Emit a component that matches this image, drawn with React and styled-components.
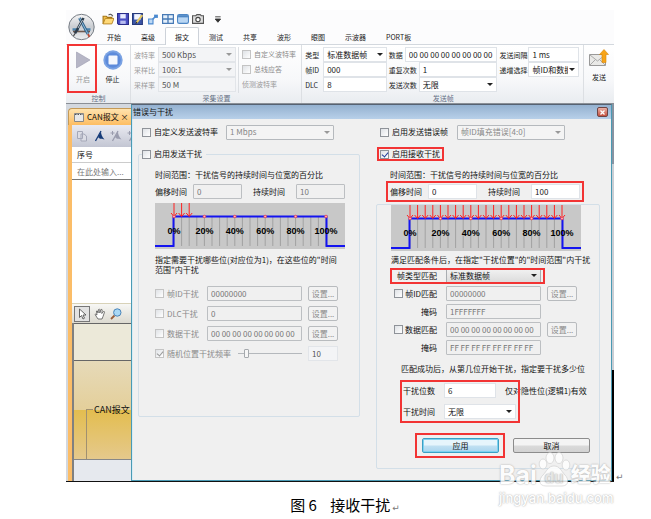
import React, { useId } from "react";
import styled, { createGlobalStyle, css } from "styled-components";

const GlobalStyle = createGlobalStyle`
  * {
    box-sizing: border-box;
  }
  body {
    margin: 0;
    background: #fff;
    color: #111;
    font-family: "Noto Sans CJK SC", sans-serif;
    font-size: 8px;
    line-height: 10px;
  }
  button, input, select {
    margin: 0;
    font: inherit;
    color: inherit;
  }
`;

const Page = styled.main`
  padding: 10px 27px 0 66px;
`;
const Figure = styled.figure`
  margin: 0;
  position: relative;
`;
const ShotRow = styled.div`
  display: flex;
  align-items: flex-end;
`;
const Shot = styled.div`
  flex: 1;
  min-width: 0;
`;
const ReturnMark = styled.span`
  width: 10px;
  padding-left: 2px;
  color: #777;
  font-family: "DejaVu Sans", sans-serif;
  font-size: 9px;
`;
const Caption = styled.figcaption`
  padding: 12px 0 0;
  text-align: center;
  white-space: pre;
  font-size: 15px;
  line-height: 22px;
  color: #000;
`;

// red annotation frame drawn over whatever it wraps
const Marked = styled.div`
  position: relative;
  &::after {
    content: "";
    position: absolute;
    inset: ${p => p.$inset || "-2px"};
    border: 2px solid #f23434;
    pointer-events: none;
  }
`;

/* ---------- ribbon ---------- */

const Ribbon = styled.header`
  background: #fcfcfd;
  font-size: 7px;
  border-bottom: 1px solid #8a8f96;
`;
const RibbonTop = styled.div`
  display: grid;
  grid-template-columns: 31px 1fr;
  align-items: center;
  border-bottom: 1px solid #d3d8de;
`;
const QuickBar = styled.div`
  display: flex;
  align-items: center;
  gap: 4px;
  height: 17px;
  padding-left: 5px;
  svg {
    width: 12px;
    height: 12px;
    margin-right: -1px;
  }
`;
const TabList = styled.nav`
  display: flex;
  height: 17px;
`;
const Tab = styled.button`
  padding: 0 9px;
  border: 1px solid ${p => (p.$active ? "#cdd2d9" : "transparent")};
  border-bottom: 0;
  border-radius: 2px 2px 0 0;
  background: ${p => (p.$active ? "#fff" : "transparent")};
  margin-bottom: -1px;
  color: #222;
  white-space: nowrap;
`;
const Groups = styled.div`
  display: flex;
  background: linear-gradient(#fff, #f7f8fa 60%, #e9ecf0);
`;
const Group = styled.section`
  display: flex;
  flex-direction: column;
  width: ${p => p.$width};
  padding: 2px 2px 0 3px;
  border-right: 1px solid #dcdfe3;
`;
const GroupBody = styled.div`
  display: flex;
  height: 46px;
`;
const GroupName = styled.div`
  text-align: center;
  color: #667085;
`;
const BigButton = styled.button`
  display: flex;
  flex-direction: column;
  align-items: center;
  gap: 4px;
  width: ${p => p.$width || "28px"};
  height: 44px;
  padding: 3px 0 0;
  border: 0;
  background: transparent;
  color: ${p => (p.$dim ? "#999" : "#222")};
  svg {
    width: 20px;
    height: 20px;
  }
`;
const RibbonFields = styled.div`
  width: ${p => p.$width};
  margin-right: 2px;
`;
const RibbonLine = styled.div`
  display: flex;
  align-items: center;
  height: 15px;
  color: ${p => (p.$dim ? "#999" : "#222")};
  label {
    flex: none;
    width: ${p => p.$label};
    white-space: nowrap;
  }
`;
const RibbonOptions = styled.div`
  display: flex;
  flex-direction: column;
  padding-left: 3px;
  border-left: 1px solid #dcdfe3;
  color: #999;
  > * {
    height: 15px;
    line-height: 15px;
  }
`;

/* ---------- form parts ---------- */

const Box = styled.input`
  flex: 1;
  min-width: 0;
  width: 100%;
  height: 15px;
  padding: 0 3px;
  border: 1px solid #dfe3e8;
  background: #fff;
  color: #222;
  font-size: 8px;
  outline: 0;
  ${p => p.$flat && css`
    border-color: #e2e5e9;
    background: #f3f4f6;
    color: #555;
  `}
  ${p => p.$off && css`
    border-color: #bcbfc2;
    border-radius: 1px;
    background: #f0f0f0;
    color: #777;
  `}
`;
const selectLooks = {
  plain: css`
    border-color: #dfe3e8;
    background: #fff;
    color: #111;
  `,
  flat: css`
    border-color: #e2e5e9;
    background: #f3f4f6;
    color: #555;
  `,
  off: css`
    border-color: #b5b9bd;
    border-radius: 1px;
    background: #f4f4f4;
    color: #888;
  `,
  button: css`
    border-color: #a9adb1;
    border-radius: 1px;
    background: linear-gradient(#f2f2f2, #dcdcdc);
    color: #111;
  `
};
const SelectWrap = styled.span`
  position: relative;
  display: flex;
  flex: 1;
  min-width: 0;
  width: ${p => p.$width || "100%"};
  &::after {
    content: "";
    position: absolute;
    right: 4px;
    top: 6px;
    border: 3px solid transparent;
    border-top-color: ${p => (p.$look === "off" || p.$look === "flat" ? "#999" : "#222")};
    border-bottom: 0;
    pointer-events: none;
  }
  select {
    appearance: none;
    width: 100%;
    height: 15px;
    padding: 0 10px 0 3px;
    border: 1px solid;
    opacity: 1;
    outline: 0;
    font-size: 8px;
    ${p => selectLooks[p.$look || "plain"]}
  }
`;
const Tick = styled.label`
  display: inline-flex;
  align-items: center;
  gap: 3px;
  white-space: nowrap;
  color: ${p => (p.$dim ? "#8a8a8a" : "inherit")};
  input {
    appearance: none;
    position: relative;
    flex: none;
    width: 9px;
    height: 9px;
    border: 1px solid ${p => (p.$dim ? "#c4c4c4" : "#8f9399")};
    background: linear-gradient(135deg, #dfe2e6, #fff);
  }
  input:checked::after {
    content: "";
    position: absolute;
    left: 2px;
    top: 0;
    width: 3px;
    height: 5px;
    border: solid ${p => (p.$dim ? "#999" : "#243f9c")};
    border-width: 0 1px 1px 0;
    transform: rotate(40deg);
  }
`;
const PushButton = styled.button`
  height: 15px;
  padding: 0;
  border: 1px solid #8c8c8c;
  border-radius: 2px;
  background: linear-gradient(#f4f4f4 45%, #dadada 55%, #d2d2d2);
  ${p => p.$wide && css`
    width: 77px;
  `}
  ${p => p.$primary && css`
    border-color: #3c9fc4;
    background: linear-gradient(#e6f5fc 45%, #c0e0f2 55%, #a9d5ee);
    box-shadow: inset 0 0 0 1px #7fd2ef;
  `}
  ${p => p.$off && css`
    border-color: #b8bbbe;
    background: #f2f2f2;
    color: #8a8a8a;
  `}
`;

function Select({ label, value, look, width }) {
  return (
    <SelectWrap $look={look} $width={width}>
      <select aria-label={label} disabled={look === "off"} defaultValue={value}>
        <option>{value}</option>
      </select>
    </SelectWrap>
  );
}

function Check({ children, checked, dim }) {
  return (
    <Tick $dim={dim}>
      <input type="checkbox" defaultChecked={checked} disabled={dim} />
      {children}
    </Tick>
  );
}

function RibbonField({ label, width, value, dim, select }) {
  const id = useId();
  return (
    <RibbonLine $label={width} $dim={dim}>
      <label htmlFor={id}>{label}</label>
      {select ? (
        <SelectWrap $look={dim ? "flat" : "plain"}>
          <select id={id} defaultValue={value}>
            <option>{value}</option>
          </select>
        </SelectWrap>
      ) : (
        <Box id={id} defaultValue={value} $flat={dim} />
      )}
    </RibbonLine>
  );
}

/* ---------- left workspace ---------- */

const Workspace = styled.div`
  display: grid;
  grid-template-columns: 65px 1fr 2px;
  border-bottom: 1px solid #111;
`;
const Side = styled.aside`
  display: flex;
  flex-direction: column;
  padding: 4px 0 0 2px;
  background: #d3d8df;
  overflow: hidden;
`;
const DocTab = styled.div`
  display: flex;
  align-items: center;
  gap: 3px;
  height: 17px;
  padding-left: 5px;
  border: 1px solid #c49a58;
  border-width: 1px 0 0 1px;
  border-radius: 4px 0 0 0;
  background: linear-gradient(#ffe3ae, #fdbd62);
  white-space: nowrap;
  svg {
    flex: none;
  }
`;
const DocBody = styled.div`
  display: flex;
  flex: 1;
  flex-direction: column;
  border-left: 4px solid #fbbd68;
  background: #fff;
`;
const ToolStrip = styled.div`
  display: flex;
  align-items: center;
  gap: ${p => (p.$light ? "4px" : "5px")};
  height: ${p => (p.$light ? "19px" : "22px")};
  padding-left: ${p => (p.$light ? "2px" : "4px")};
  background: ${p => (p.$light ? "linear-gradient(#f7f7f5, #dcdad0)" : "linear-gradient(#e9eaf1, #c3c6d3)")};
  svg {
    flex: none;
    width: 12px;
    height: 12px;
  }
`;
const ToolPick = styled.span`
  display: flex;
  padding: 1px;
  border: 1px solid #777;
  background: #e2e2e2;
`;
const ListHead = styled.div`
  height: 16px;
  padding: 3px 5px;
  border-bottom: 1px solid #ccc;
`;
const ListHint = styled.div`
  height: 17px;
  padding: 4px 5px;
  border-bottom: 1px solid #777;
  color: #777;
  white-space: nowrap;
`;
const ListSpace = styled.div`
  height: 124px;
  border-bottom: 1px solid #d8d2b8;
`;
const Canvas = styled.div`
  display: flex;
  flex: 1;
  flex-direction: column;
  border-left: 2px solid #808080;
  background: #e6e9ee;
`;
const Ruler = styled.div`
  height: 38px;
  border: 1px solid #666;
  border-width: 1px 0;
  background: #ece9d9;
`;
const Lane = styled.div`
  display: flex;
  align-items: center;
  height: 99px;
  padding-left: 12px;
  border-bottom: 1px solid #888;
  background: linear-gradient(#e6dab9, #e4cf9a 50%, #e3bd4f 50%, #e5c98c);
  font-size: 9px;
  white-space: nowrap;
  &::before {
    content: "";
    flex: none;
    align-self: flex-end;
    width: 6px;
    height: 49px;
    margin-right: 1px;
    border: 1px solid #a09070;
    border-width: 1px 0 0 1px;
  }
`;
const Edge = styled.div`
  background: linear-gradient(#8894a2 0 60px, #c9ced4 60px 266px, #000 266px);
`;

/* ---------- dialog ---------- */

const Dialog = styled.section`
  border: 1px solid #4a9ab4;
  border-top-color: #566272;
  background: #f0f0f0;
  box-shadow: inset 1px 0 0 #d7ecf5;
`;
const TitleBar = styled.div`
  display: flex;
  align-items: center;
  justify-content: space-between;
  height: 14px;
  padding: 0 3px 0 1px;
  background: linear-gradient(#94b1d0, #b8d0e9);
`;
const CloseButton = styled.button`
  display: flex;
  align-items: center;
  justify-content: center;
  width: 11px;
  height: 10px;
  padding: 0;
  border: 1px solid #6e4444;
  border-radius: 2px;
  background: linear-gradient(#e9b0a6, #c5503f);
`;
const DialogBody = styled.div`
  display: grid;
  grid-template-columns: 222fr 224fr;
  gap: 16px;
  align-items: start;
  padding: 6px 11px 11px 6px;
`;
const TopLine = styled.div`
  display: flex;
  align-items: center;
  height: 14px;
  margin-bottom: 8px;
  padding-left: 4px;
  > label {
    width: ${p => p.$label};
  }
`;
const Fieldset = styled.fieldset`
  min-width: 0;
  margin: 0;
  padding: 0 3px;
  border: 1px solid #d3dfe8;
  border-radius: 2px;
  legend {
    display: flex;
    height: 14px;
    padding: 0 4px 0 0;
  }
`;
const SendArea = styled.div`
  display: flex;
  flex-direction: column;
  padding: 9px 11px 55px 13px;
`;
const Note = styled.p`
  margin: ${p => p.$margin || "0"};
  white-space: nowrap;
`;
const TimeLine = styled.div`
  display: flex;
  justify-content: space-between;
  width: 190px;
  margin-top: 4px;
`;
const MarkedTime = styled(Marked)`
  display: flex;
  justify-content: space-between;
  width: 190px;
  margin-top: 4px;
`;
const TimeItem = styled.label`
  display: flex;
  align-items: center;
  white-space: nowrap;
  gap: ${p => (p.$last ? "11px" : "6px")};
  input {
    flex: none;
    width: 49px;
  }
`;
const Rows = styled.div`
  display: grid;
  gap: ${p => p.$gap};
`;
const Row = styled.div`
  display: grid;
  grid-template-columns: ${p => p.$label} 95px 30px;
  column-gap: 6px;
  align-items: center;
  height: 15px;
`;
const RowLabel = styled.div`
  display: flex;
  justify-content: flex-end;
  padding-right: 3px;
  white-space: nowrap;
  ${Tick} {
    gap: 2px;
  }
`;
const TypeMark = styled(Marked)`
  width: 150px;
`;
const SlideLine = styled.div`
  display: grid;
  grid-template-columns: 77px 64px 30px;
  column-gap: 6px;
  align-items: center;
  height: 15px;
  input[type="range"] {
    appearance: none;
    width: 100%;
    height: 9px;
    background: linear-gradient(transparent 4px, #b4b8bc 4px 5px, transparent 5px);
  }
  input[type="range"]::-webkit-slider-thumb {
    appearance: none;
    width: 5px;
    height: 9px;
    border: 1px solid #a5a9ad;
    border-radius: 1px;
    background: #f6f6f6;
  }
`;
const ReceiveHead = styled.div`
  display: flex;
  height: 14px;
  padding-left: 4px;
`;
const HeadMark = styled(Marked)`
  display: flex;
`;
const ReceiveTime = styled.div`
  padding: 9px 0 5px 14px;
`;
const ReceiveBox = styled.div`
  padding: 0 4px 15px 14px;
  border: 1px solid #d3dfe8;
  border-radius: 2px;
`;
const BitsArea = styled(Marked)`
  display: grid;
  gap: 6px;
  width: 116px;
  margin: 9px 0 0 11px;
  padding-left: 1px;
`;
const BitsLine = styled.div`
  display: grid;
  grid-template-columns: 32px 52px auto;
  column-gap: 9px;
  align-items: center;
  height: 15px;
  white-space: nowrap;
`;
const Actions = styled.div`
  display: flex;
  gap: 14px;
  margin: 19px 0 0 31px;
`;
const ChartSvg = styled.svg`
  display: block;
  width: 190px;
  height: 46px;
  margin-top: ${p => (p.$gap ? "4px" : "0")};
`;

const marks = Array.from({ length: 21 }, (_, i) => 19 + i * 7.6);

function BitChart({ arrows, gap }) {
  return (
    <ChartSvg $gap={gap} viewBox="0 0 190 46">
      <rect width="190" height="46" fill="#c8c8c8" />
      {marks.map(x => (
        <path key={x} d={`M${x} 14V43`} stroke="#a2a2a2" strokeWidth="1" />
      ))}
      <path d="M0 43H18.500V13.500H171.500V43H190" fill="none" stroke="#1414f0" strokeWidth="2" />
      {marks.slice(0, arrows).map(x => (
        <path
          key={x}
          d={`M${x} 0V13M${x - 3} 10L${x} 13.500L${x + 3} 10`}
          fill="none"
          stroke="#f22"
          strokeWidth="1"
        />
      ))}
      {[0, 20, 40, 60, 80, 100].map(n => (
        <g key={n}>
          <circle cx={19 + n * 1.52} cy="13.500" r="1.300" fill="#fbb" stroke="#f33" strokeWidth=".7" />
          <text
            x={19 + n * 1.52}
            y="31"
            textAnchor="middle"
            fontFamily="Liberation Sans, sans-serif"
            fontSize="9"
            fontWeight="700"
            fill="#000"
          >
            {n}%
          </text>
        </g>
      ))}
    </ChartSvg>
  );
}

function MatchRow({ label, check, dim, value, button, right }) {
  const text = check ? <Check dim={dim}>{label}</Check> : label;
  return (
    <Row $label={right ? "49px" : "46px"}>
      {right ? <RowLabel>{text}</RowLabel> : text}
      <Box aria-label={label} defaultValue={value} readOnly $off />
      {button && (
        <PushButton $off disabled>
          设置...
        </PushButton>
      )}
    </Row>
  );
}

/* ---------- icons ---------- */

const Logo = () => (
  <svg width="31" height="29" viewBox="0 0 31 29">
    <defs>
      <linearGradient id="ball" x2="0" y2="1">
        <stop offset="0" stopColor="#f5f5f6" />
        <stop offset=".5" stopColor="#c9ccd1" />
        <stop offset="1" stopColor="#eceef0" />
      </linearGradient>
    </defs>
    <circle cx="15.500" cy="14" r="12.700" fill="url(#ball)" stroke="#777d85" />
    <path d="M6.500 16.500H13M18 16.500h6.500" stroke="#4b83ad" strokeWidth="2.400" />
    <path d="M7 18.500H24" stroke="#6e5a50" strokeWidth="1.600" />
    <path d="M13.500 5L22 21" stroke="#34668d" strokeWidth="2.800" />
    <path d="M13.500 5L22 21" stroke="#8db9d8" strokeWidth="1" />
    <path d="M17.500 5L9 20.500" stroke="#2d3b49" strokeWidth="2.500" />
    <path d="M16.500 7L12 15" stroke="#b7cada" strokeWidth="1" />
    <path d="M22 21l1.500 3" stroke="#b74a36" strokeWidth="1.800" />
    <path d="M9 20.500l-1.500 2.500" stroke="#444" strokeWidth="1.200" />
  </svg>
);
const OpenIcon = () => (
  <svg viewBox="0 0 11 11">
    <path d="M1 10V3h3l1 1h4v2" fill="#f2c14b" stroke="#a57617" />
    <path d="M1 10l2-5h8l-2 5z" fill="#ffd978" stroke="#b3811f" strokeWidth=".8" />
    <path d="M6 2q2-2 4 1" fill="none" stroke="#555" />
  </svg>
);
const SaveIcon = () => (
  <svg viewBox="0 0 11 11">
    <path d="M.5.5h10v10h-9l-1-1z" fill="#4a4fc4" stroke="#2a2d8a" />
    <path d="M3 1h5v4H3z" fill="#e8ebff" />
    <path d="M3 7h5v3H3z" fill="#b8bdf0" />
  </svg>
);
const SaveAsIcon = () => (
  <svg viewBox="0 0 11 11">
    <path d="M.5.5h9v10h-9z" fill="#3b55a8" stroke="#26397a" />
    <path d="M2 1h6v5H2z" fill="#f1f4ff" />
    <path d="M4 9L9.500 2" stroke="#e5c860" strokeWidth="1.800" />
    <path d="M3 10l1-2 1 1z" fill="#222" />
  </svg>
);
const LinkIcon = () => (
  <svg viewBox="0 0 11 11">
    <path d="M6.500 1.500h3.500v3H6.500z" fill="#4a88cf" />
    <path d="M4.500 6.500l3-3" stroke="#4a88cf" strokeWidth="1.400" />
    <path d="M1.500 5.500h4v4.500h-4z" fill="#bcd8f4" stroke="#4a88cf" />
  </svg>
);
const GridIcon = () => (
  <svg viewBox="0 0 11 11">
    <path d="M.5 1.500h10v8H.5zM5.500 1.500v8M.5 5.500h10" fill="#e5f0fb" stroke="#4779b5" strokeWidth="1.200" />
  </svg>
);
const WindowIcon = () => (
  <svg viewBox="0 0 11 11">
    <rect x=".5" y="1.500" width="10" height="8" rx="1.500" fill="#b9d6f3" stroke="#4d86c4" />
    <path d="M1 3h9" stroke="#4d86c4" strokeWidth="2" />
  </svg>
);
const CameraIcon = () => (
  <svg viewBox="0 0 11 11">
    <path d="M.5 2.500h3l1-1h3l1 1h2v7H.5z" fill="#ddd" stroke="#555" />
    <circle cx="5.500" cy="6" r="2" fill="#fff" stroke="#444" />
  </svg>
);
const MoreIcon = () => (
  <svg viewBox="0 0 11 11" overflow="visible">
    <path d="M7.500 3.500h5M7.500 5.500h5l-2.500 3z" fill="#333" stroke="#333" strokeWidth=".8" />
  </svg>
);
const PlayIcon = () => (
  <svg viewBox="0 0 20 20">
    <path d="M3.500 2L17 10L3.500 18z" fill="#b6b6c6" stroke="#9a9aae" strokeWidth=".6" />
  </svg>
);
const StopIcon = () => (
  <svg viewBox="0 0 20 20">
    <circle cx="10" cy="10" r="9.700" fill="#7ba3e3" />
    <circle cx="10" cy="10" r="7.800" fill="#5d8bdb" />
    <rect x="5.500" y="5.500" width="9" height="9" rx="1" fill="#f4f7fd" />
  </svg>
);
const SendIcon = () => (
  <svg viewBox="0 0 20 20">
    <path d="M.5 6.500h16v11H.5z" fill="#e9e9e7" stroke="#999" />
    <path d="M1 7l7.500 6L16 7M1 17l5.500-5.500M16 17l-5.500-5.500" fill="none" stroke="#aaa" />
    <path d="M15 1.500l4.500 5h-2.500v8h-4v-8h-2.500z" fill="#f7a417" stroke="#d78708" strokeWidth=".6" />
  </svg>
);
const FormIcon = () => (
  <svg width="10" height="9" viewBox="0 0 10 9">
    <path d="M.5.5h9v8h-9z" fill="#e8e8e8" stroke="#888" />
    <path d="M1 1.500h8" stroke="#555" strokeDasharray="1.500 1" />
  </svg>
);
const CopyIcon = () => (
  <svg viewBox="0 0 12 12">
    <path d="M1.500 1.500h5v7h-5zM5 4h3l2.500 2v5H5z" fill="#dcdde5" stroke="#a5a8b8" />
  </svg>
);
const FlagIcon = ({ color, plus }) => (
  <svg viewBox="0 0 12 12">
    <path d="M8 1L2.500 11" stroke={color} strokeWidth="1.300" />
    <path d="M8 1.500c0 3 1 5 3.500 8-2.500-1-4 .5-6.500-2.500z" fill={color} />
    {plus && <path d="M2.500 1v4M.5 3h4" stroke={color} />}
  </svg>
);
const CursorIcon = () => (
  <svg viewBox="0 0 12 12">
    <path d="M3.500 1v8.500l2-2 1.500 3.500 1.500-.8L7 7h3z" fill="#fff" stroke="#555" strokeWidth=".9" />
  </svg>
);
const HandIcon = () => (
  <svg viewBox="0 0 12 12">
    <path
      d="M4 11L1 6.500q.5-1 2 .5L2.500 3q1-1 1.500 2L4.500 1.500q1-1 1.300 0V5L7 1.500q1-.5 1.200.5L7.800 5.500l1.700-2q1-.3 1 .7L9 8.500 8 11z"
      fill="#fff"
      stroke="#555"
      strokeWidth=".8"
    />
  </svg>
);
const LensIcon = () => (
  <svg viewBox="0 0 12 12">
    <path d="M4.500 7.500L1 11" stroke="#9a5f3a" strokeWidth="1.800" />
    <circle cx="7.300" cy="4.500" r="3.700" fill="#a9d8f5" stroke="#4a84b8" />
  </svg>
);

/* ---------- watermark ---------- */

const Watermark = styled.div`
  position: absolute;
  right: 6px;
  bottom: 13px;
  width: 119px;
  font-family: Inter, "Noto Sans CJK SC", sans-serif;
  font-weight: 700;
  color: #fff;
  opacity: 0.85;
  text-shadow: 0 0 2px #aaa, 0 0 1px #bbb;
  white-space: nowrap;
  pointer-events: none;
`;
const Brand = styled.div`
  display: flex;
  align-items: center;
  font-size: 25px;
  line-height: 24px;
  b {
    font-size: 20px;
  }
  svg {
    flex: none;
    overflow: visible;
  }
`;
const Site = styled.div`
  margin-top: 3px;
  font-size: 13px;
  font-weight: 500;
  line-height: 16px;
`;

const PawIcon = () => (
  <svg width="34" height="24" viewBox="0 0 34 24">
    <g fill="#fff" stroke="#c4c4c4" strokeWidth=".6">
      <ellipse cx="6" cy="1" rx="3.800" ry="5" />
      <ellipse cx="13" cy="-5" rx="4" ry="5.500" />
      <ellipse cx="22" cy="-5" rx="4" ry="5.500" />
      <ellipse cx="29" cy="2" rx="3.800" ry="5" />
      <path d="M17 3c6 0 7 5 11 9s4 11-3 11H9C1 23 2 16 6 12S11 3 17 3z" />
    </g>
    <text x="17" y="20" textAnchor="middle" fontSize="15" fill="#e4e4e4">
      du
    </text>
  </svg>
);

const tabs = ["开始", "高级", "报文", "测试", "共享", "波形", "眼图", "示波器", "PORT板"];

const App = () => (
  <Page>
    <GlobalStyle />
    <Figure>
      <ShotRow>
        <Shot>
          <Ribbon>
            <RibbonTop>
              <Logo />
              <div>
                <QuickBar>
                  <OpenIcon />
                  <SaveIcon />
                  <SaveAsIcon />
                  <LinkIcon />
                  <GridIcon />
                  <WindowIcon />
                  <CameraIcon />
                  <MoreIcon />
                </QuickBar>
                <TabList>
                  {tabs.map(t => (
                    <Tab key={t} $active={t === "报文"}>
                      {t}
                    </Tab>
                  ))}
                </TabList>
              </div>
            </RibbonTop>
            <Groups>
              <Group $width="65px">
                <GroupBody>
                  <Marked $inset="-3px 0 0 -2px">
                    <BigButton $dim>
                      <PlayIcon />
                      开启
                    </BigButton>
                  </Marked>
                  <BigButton $width="32px">
                    <StopIcon />
                    停止
                  </BigButton>
                </GroupBody>
                <GroupName>控制</GroupName>
              </Group>
              <Group $width="172px">
                <GroupBody>
                  <RibbonFields $width="102px">
                    <RibbonField label="波特率" width="24px" value="500 Kbps" dim select />
                    <RibbonField label="采样比" width="24px" value="100:1" dim select />
                    <RibbonField label="采样率" width="24px" value="50 M" dim />
                  </RibbonFields>
                  <RibbonOptions>
                    <Check dim>自定义波特率</Check>
                    <Check dim>总线应答</Check>
                    <span>侦测波特率</span>
                  </RibbonOptions>
                </GroupBody>
                <GroupName>采集设置</GroupName>
              </Group>
              <Group $width="282px">
                <GroupBody>
                  <RibbonFields $width="82px">
                    <RibbonField label="类型" width="18px" value="标准数据帧" select />
                    <RibbonField label="帧ID" width="18px" value="000" />
                    <RibbonField label="DLC" width="18px" value="8" />
                  </RibbonFields>
                  <RibbonFields $width="109px">
                    <RibbonField label="数据" width="16px" value="00 00 00 00 00 00 00 00" />
                    <RibbonField label="重复次数" width="30px" value="1" />
                    <RibbonField label="发送次数" width="30px" value="无限" select />
                  </RibbonFields>
                  <RibbonFields $width="80px">
                    <RibbonField label="发送间隔" width="29px" value="1 ms" />
                    <RibbonField label="递增选择" width="29px" value="帧ID和数据递增" select />
                  </RibbonFields>
                </GroupBody>
                <GroupName>发送帧</GroupName>
              </Group>
              <BigButton $width="30px">
                <SendIcon />
                发送
              </BigButton>
            </Groups>
          </Ribbon>

          <Workspace>
            <Side>
              <DocTab>
                <FormIcon />
                CAN报文 ×
              </DocTab>
              <DocBody>
                <ToolStrip>
                  <CopyIcon />
                  <FlagIcon color="#163b78" />
                  <FlagIcon color="#9a9cae" plus />
                  <FlagIcon color="#9a9cae" plus />
                </ToolStrip>
                <ListHead>序号</ListHead>
                <ListHint>在此处输入...</ListHint>
                <ListSpace />
                <ToolStrip $light>
                  <ToolPick>
                    <CursorIcon />
                  </ToolPick>
                  <HandIcon />
                  <LensIcon />
                </ToolStrip>
                <Canvas>
                  <Ruler />
                  <Lane>CAN报文</Lane>
                </Canvas>
              </DocBody>
            </Side>

            <Dialog>
              <TitleBar>
                错误与干扰
                <CloseButton aria-label="关闭">
                  <svg width="5" height="5" viewBox="0 0 5 5">
                    <path d="M.5.5l4 4M4.500.5l-4 4" stroke="#fff" strokeWidth="1.300" />
                  </svg>
                </CloseButton>
              </TitleBar>
              <DialogBody>
                <div>
                  <TopLine $label="84px">
                    <Check>自定义发送波特率</Check>
                    <div>
                      <Select label="波特率" value="1 Mbps" look="off" width="108px" />
                    </div>
                  </TopLine>
                  <Fieldset>
                    <legend>
                      <Check>启用发送干扰</Check>
                    </legend>
                    <SendArea>
                      <Note>时间范围：干扰信号的持续时间与位宽的百分比</Note>
                      <TimeLine>
                        <TimeItem>
                          偏移时间
                          <Box defaultValue="0" readOnly $off />
                        </TimeItem>
                        <TimeItem $last>
                          持续时间
                          <Box defaultValue="10" readOnly $off />
                        </TimeItem>
                      </TimeLine>
                      <BitChart arrows={3} gap />
                      <Note $margin="6px 0 0">指定需要干扰哪些位(对应位为1)，在这些位的"时间</Note>
                      <Note $margin="0 0 11px">范围"内干扰</Note>
                      <Rows $gap="5px">
                        <MatchRow label="帧ID干扰" check dim value="00000000" button />
                        <MatchRow label="DLC干扰" check dim value="0" button />
                        <MatchRow label="数据干扰" check dim value="00 00 00 00 00 00 00 00" button />
                        <SlideLine>
                          <Check checked dim>
                            随机位置干扰频率
                          </Check>
                          <input type="range" aria-label="干扰频率" defaultValue="10" />
                          <Box aria-label="频率" defaultValue="10" $flat />
                        </SlideLine>
                      </Rows>
                    </SendArea>
                  </Fieldset>
                </div>

                <div>
                  <TopLine $label="77px">
                    <Check>启用发送错误帧</Check>
                    <div>
                      <Select label="错误帧类型" value="帧ID填充错误[4:0]" look="off" width="108px" />
                    </div>
                  </TopLine>
                  <ReceiveHead>
                    <HeadMark $inset="0 -4px 0 -3px">
                      <Check checked>启用接收干扰</Check>
                    </HeadMark>
                  </ReceiveHead>
                  <ReceiveTime>
                    <Note>时间范围：干扰信号的持续时间与位宽的百分比</Note>
                    <MarkedTime $inset="-3px -4px">
                      <TimeItem>
                        偏移时间
                        <Box defaultValue="0" />
                      </TimeItem>
                      <TimeItem $last>
                        持续时间
                        <Box defaultValue="100" />
                      </TimeItem>
                    </MarkedTime>
                  </ReceiveTime>
                  <ReceiveBox>
                    <BitChart arrows={21} />
                    <Note $margin="4px 0 3px">满足匹配条件后，在指定"干扰位置"的"时间范围"内干扰</Note>
                    <Rows $gap="3px">
                      <TypeMark $inset="0 -4px -1px -1px">
                        <Row $label="49px">
                          <RowLabel>帧类型匹配</RowLabel>
                          <Select label="帧类型匹配" value="标准数据帧" look="button" />
                        </Row>
                      </TypeMark>
                      <MatchRow right label="帧ID匹配" check value="00000000" button />
                      <MatchRow right label="掩码" value="1FFFFFFF" />
                      <MatchRow right label="数据匹配" check value="00 00 00 00 00 00 00 00" button />
                      <MatchRow right label="掩码" value="FF FF FF FF FF FF FF FF" />
                    </Rows>
                    <Note $margin="9px 0 0 10px">匹配成功后，从第几位开始干扰，指定要干扰多少位</Note>
                    <BitsArea $inset="-3px -2px -4px">
                      <BitsLine>
                        <label htmlFor="bits">干扰位数</label>
                        <Box id="bits" defaultValue="6" />
                        <span>仅对隐性位(逻辑1)有效</span>
                      </BitsLine>
                      <BitsLine>
                        <span>干扰时间</span>
                        <Select label="干扰时间" value="无限" width="72px" />
                      </BitsLine>
                    </BitsArea>
                    <Actions>
                      <Marked $inset="-5px -6px -5px -7px">
                        <PushButton $wide $primary>
                          应用
                        </PushButton>
                      </Marked>
                      <PushButton $wide>取消</PushButton>
                    </Actions>
                  </ReceiveBox>
                </div>
              </DialogBody>
            </Dialog>
            <Edge />
          </Workspace>
        </Shot>
        <ReturnMark>↵</ReturnMark>
      </ShotRow>
      <Caption>
        图 6{"    "}接收干扰<ReturnMark>↵</ReturnMark>
      </Caption>
      <Watermark>
        <Brand>
          Bai
          <PawIcon />
          <b>经验</b>
        </Brand>
        <Site>jingyan.baidu.com</Site>
      </Watermark>
    </Figure>
  </Page>
);

export default App;
